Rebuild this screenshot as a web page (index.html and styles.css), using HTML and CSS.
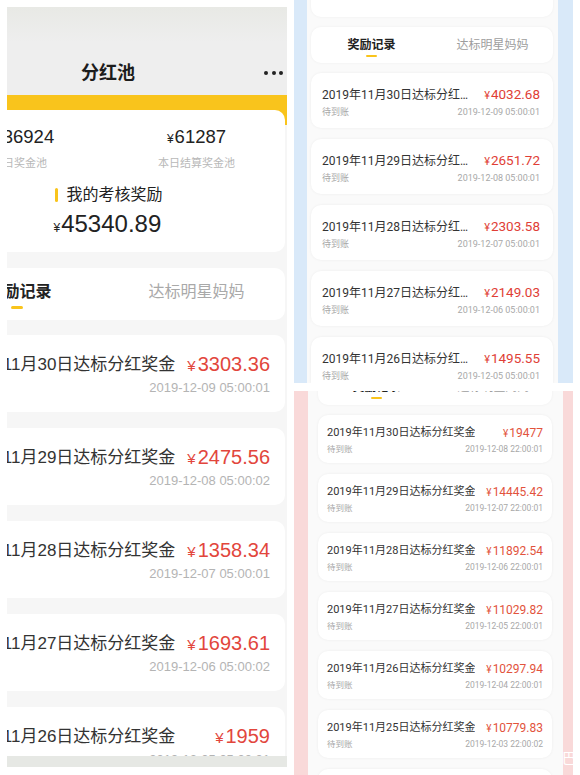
FILE: index.html
```html
<!DOCTYPE html>
<html lang="zh-CN">
<head>
<meta charset="utf-8">
<title>分红池</title>
<link rel="stylesheet" href="styles.css">
</head>
<body>
<div class="collage">
  <section class="phone-left">
    <div class="lp-viewport">
      <div class="lp-content">
        <header class="lp-header">
          <div class="lp-titlebar">
            <span></span>
            <h1>分红池</h1>
            <span class="lp-more"><i></i><i></i><i></i></span>
          </div>
        </header>
        <div class="lp-body">
          <div class="summary">
            <div class="stats">
              <div class="stat">
                <div class="stat-num"><span class="yen-s">¥</span>136924</div>
                <div class="stat-label">今日奖金池</div>
              </div>
              <div class="stat">
                <div class="stat-num"><span class="yen-s">¥</span>61287</div>
                <div class="stat-label">本日结算奖金池</div>
              </div>
            </div>
            <div class="mine">
              <div class="mine-inner">
                <div class="mine-title">我的考核奖励</div>
                <div class="mine-amount"><span class="yen-s">¥</span>45340.89</div>
              </div>
            </div>
          </div>

          <div class="lp-tabs">
            <div class="lp-tab active">奖励记录</div>
            <div class="lp-tab">达标明星妈妈</div>
          </div>

          <div class="lp-list">
            <div class="lcard">
              <div class="lrow"><span class="ltitle">2019年11月30日达标分红奖金</span><span class="lamount"><span class="y">¥</span>3303.36</span></div>
              <div class="ldate">2019-12-09 05:00:01</div>
            </div>
            <div class="lcard">
              <div class="lrow"><span class="ltitle">2019年11月29日达标分红奖金</span><span class="lamount"><span class="y">¥</span>2475.56</span></div>
              <div class="ldate">2019-12-08 05:00:02</div>
            </div>
            <div class="lcard">
              <div class="lrow"><span class="ltitle">2019年11月28日达标分红奖金</span><span class="lamount"><span class="y">¥</span>1358.34</span></div>
              <div class="ldate">2019-12-07 05:00:01</div>
            </div>
            <div class="lcard">
              <div class="lrow"><span class="ltitle">2019年11月27日达标分红奖金</span><span class="lamount"><span class="y">¥</span>1693.61</span></div>
              <div class="ldate">2019-12-06 05:00:02</div>
            </div>
            <div class="lcard">
              <div class="lrow"><span class="ltitle">2019年11月26日达标分红奖金</span><span class="lamount"><span class="y">¥</span>1959</span></div>
              <div class="ldate">2019-12-05 05:00:01</div>
            </div>
          </div>
        </div>
      </div>
    </div>
    <div class="lp-bar"></div>
  </section>

  <div class="right-col">
    <section class="phone phone-blue">
      <div class="screen">
        <div class="top-card"></div>
        <div class="tabs">
          <div class="tab active">奖励记录</div>
          <div class="tab">达标明星妈妈</div>
        </div>
        <div class="list">
          <div class="card">
            <div class="row"><span class="title">2019年11月30日达标分红奖金</span><span class="amount"><span class="y">¥</span>4032.68</span></div>
            <div class="sub"><span>待到账</span><span>2019-12-09 05:00:01</span></div>
          </div>
          <div class="card">
            <div class="row"><span class="title">2019年11月29日达标分红奖金</span><span class="amount"><span class="y">¥</span>2651.72</span></div>
            <div class="sub"><span>待到账</span><span>2019-12-08 05:00:01</span></div>
          </div>
          <div class="card">
            <div class="row"><span class="title">2019年11月28日达标分红奖金</span><span class="amount"><span class="y">¥</span>2303.58</span></div>
            <div class="sub"><span>待到账</span><span>2019-12-07 05:00:01</span></div>
          </div>
          <div class="card">
            <div class="row"><span class="title">2019年11月27日达标分红奖金</span><span class="amount"><span class="y">¥</span>2149.03</span></div>
            <div class="sub"><span>待到账</span><span>2019-12-06 05:00:01</span></div>
          </div>
          <div class="card">
            <div class="row"><span class="title">2019年11月26日达标分红奖金</span><span class="amount"><span class="y">¥</span>1495.55</span></div>
            <div class="sub"><span>待到账</span><span>2019-12-05 05:00:01</span></div>
          </div>
        </div>
      </div>
    </section>

    <section class="phone phone-pink">
      <div class="screen">
        <div class="tabs">
          <div class="tab active">奖励记录</div>
          <div class="tab">达标明星妈妈</div>
        </div>
        <div class="list">
          <div class="card">
            <div class="row"><span class="title">2019年11月30日达标分红奖金</span><span class="amount"><span class="y">¥</span>19477</span></div>
            <div class="sub"><span>待到账</span><span>2019-12-08 22:00:01</span></div>
          </div>
          <div class="card">
            <div class="row"><span class="title">2019年11月29日达标分红奖金</span><span class="amount"><span class="y">¥</span>14445.42</span></div>
            <div class="sub"><span>待到账</span><span>2019-12-07 22:00:01</span></div>
          </div>
          <div class="card">
            <div class="row"><span class="title">2019年11月28日达标分红奖金</span><span class="amount"><span class="y">¥</span>11892.54</span></div>
            <div class="sub"><span>待到账</span><span>2019-12-06 22:00:01</span></div>
          </div>
          <div class="card">
            <div class="row"><span class="title">2019年11月27日达标分红奖金</span><span class="amount"><span class="y">¥</span>11029.82</span></div>
            <div class="sub"><span>待到账</span><span>2019-12-05 22:00:01</span></div>
          </div>
          <div class="card">
            <div class="row"><span class="title">2019年11月26日达标分红奖金</span><span class="amount"><span class="y">¥</span>10297.94</span></div>
            <div class="sub"><span>待到账</span><span>2019-12-04 22:00:01</span></div>
          </div>
          <div class="card">
            <div class="row"><span class="title">2019年11月25日达标分红奖金</span><span class="amount"><span class="y">¥</span>10779.83</span></div>
            <div class="sub"><span>待到账</span><span>2019-12-03 22:00:02</span></div>
          </div>
          <div class="card">
            <div class="row"><span class="title">2019年11月24日达标分红奖金</span><span class="amount"><span class="y">¥</span>10512.36</span></div>
            <div class="sub"><span>待到账</span><span>2019-12-02 22:00:01</span></div>
          </div>
        </div>
      </div>
    </section>
  </div>

  <span class="watermark">巴</span>
</div>
</body>
</html>
```

FILE: styles.css
```css
* { box-sizing: border-box; }

html, body {
  margin: 0;
  padding: 0;
  background: #ffffff;
}

body {
  width: 580px;
  height: 775px;
  overflow: hidden;
}

.collage {
  position: relative;
  display: flex;
  gap: 7px;
  padding-left: 7px;
  height: 775px;
}

/* ---------- left phone ---------- */
.phone-left {
  width: 280px;
  height: 760px;
  margin-top: 7px;
  display: flex;
  flex-direction: column;
  background: #f6f6f6;
  font-family: "Liberation Sans", "Noto Sans CJK SC", sans-serif;
}

.lp-viewport {
  flex: 1;
  min-height: 0;
  overflow: hidden;
  display: flex;
  justify-content: flex-end;
}

.lp-content {
  width: 358px;
  flex-shrink: 0;
}

.lp-header {
  height: 88px;
  padding-top: 44px;
  background: linear-gradient(#e8e9e5, #eeeeee 40%, #eeeeee);
}

.lp-titlebar {
  height: 44px;
  display: grid;
  grid-template-columns: 1fr auto 1fr;
  align-items: center;
}

.lp-titlebar h1 {
  margin: 0;
  font-size: 18px;
  line-height: 24px;
  font-weight: bold;
  color: #1c1c1c;
}

.lp-more {
  justify-self: end;
  display: flex;
  gap: 3.5px;
  margin-right: 4px;
}

.lp-more i {
  width: 4px;
  height: 4px;
  border-radius: 50%;
  background: #222;
}

.lp-body {
  padding: 15px 2px 0;
  background: linear-gradient(#f9c41c 0, #f9c41c 30px, #f6f6f6 30px);
}

.summary {
  height: 142px;
  background: #ffffff;
  border-radius: 10px;
  overflow: hidden;
}

.stats {
  display: grid;
  grid-template-columns: 1fr 1fr;
  padding-top: 15px;
  text-align: center;
}

.stat-num {
  height: 24px;
  font-size: 18.5px;
  line-height: 24px;
  color: #222;
  white-space: nowrap;
}

.yen-s {
  font-size: 12px;
  margin-right: 1px;
}

.stat-label {
  height: 16px;
  margin-top: 6px;
  font-size: 11px;
  line-height: 16px;
  color: #b8b8b8;
  white-space: nowrap;
}

.mine {
  margin-top: 13px;
  display: flex;
  justify-content: center;
}

.mine-title {
  height: 22px;
  display: flex;
  align-items: center;
  gap: 8px;
  padding-left: 2px;
  font-size: 16px;
  line-height: 22px;
  color: #222;
}

.mine-title::before {
  content: "";
  width: 3px;
  height: 14px;
  border-radius: 2px;
  background: #f9c41c;
}

.mine-amount {
  height: 30px;
  margin-top: 3px;
  font-size: 24px;
  line-height: 30px;
  color: #222;
}

.lp-tabs {
  margin-top: 16px;
  height: 52px;
  background: #ffffff;
  border-radius: 10px;
  display: grid;
  grid-template-columns: 1fr 1fr;
}

.lp-tab {
  padding-top: 13px;
  text-align: center;
  font-size: 16px;
  line-height: 22px;
  color: #a9a9a9;
}

.lp-tab.active {
  color: #222;
  font-weight: bold;
}

.lp-tab.active::after {
  content: "";
  display: block;
  width: 12px;
  height: 3px;
  margin: 3px auto 0;
  border-radius: 2px;
  background: #f9c41c;
  transform: translateX(-3px);
}

.lp-list {
  margin-top: 15px;
  display: flex;
  flex-direction: column;
  gap: 16px;
}

.lcard {
  height: 77px;
  background: #ffffff;
  border-radius: 10px;
  padding: 18px 15px 0 17px;
}

.lrow {
  height: 24px;
  display: flex;
  justify-content: space-between;
  align-items: center;
  line-height: 24px;
}

.ltitle {
  font-size: 17px;
  color: #333;
  white-space: nowrap;
}

.lamount {
  font-size: 20px;
  color: #e2463c;
  white-space: nowrap;
}

.lamount .y {
  font-size: 15px;
  margin-right: 2px;
}

.ldate {
  height: 16px;
  margin-top: 3px;
  text-align: right;
  font-size: 13px;
  line-height: 16px;
  color: #b4b4b4;
}

.lp-bar {
  height: 11px;
  background: #e6e8e4;
}

/* ---------- right phones ---------- */
.right-col {
  width: 279px;
  display: flex;
  flex-direction: column;
  gap: 8px;
}

.phone {
  font-family: "Roboto", "Noto Sans CJK SC", sans-serif;
}

.phone .screen {
  height: 100%;
  overflow: hidden;
  background: #fafafa;
}

.phone-blue {
  height: 383px;
  padding: 0 15px 0 13px;
  background: #d9e9f9;
}

.phone-blue .screen {
  padding: 0 5px 0 4px;
}

.phone-pink {
  height: 384px;
  padding: 0 10px 0 14px;
  background: #f9d9d9;
}

.phone-pink .screen {
  padding: 0 11px 0 10px;
}

.top-card {
  height: 50px;
  margin-top: -33px;
  background: #ffffff;
  border-radius: 10px;
  box-shadow: 0 0 3px rgba(0, 0, 0, 0.05);
}

.tabs {
  margin-top: 10px;
  height: 36px;
  display: grid;
  grid-template-columns: 1fr 1fr;
  background: #ffffff;
  border-radius: 10px;
  box-shadow: 0 0 3px rgba(0, 0, 0, 0.05);
}

.phone-pink .tabs {
  margin-top: -22px;
}

.tab {
  padding-top: 10px;
  text-align: center;
  font-size: 12px;
  line-height: 16px;
  color: #9d9d9d;
}

.tab.active {
  color: #222;
  font-weight: bold;
}

.tab.active::after {
  content: "";
  display: block;
  width: 11px;
  height: 2px;
  margin: 2px auto 0;
  border-radius: 1px;
  background: #f9c41c;
}

.list {
  margin-top: 10px;
  display: flex;
  flex-direction: column;
  gap: 11px;
}

.card {
  background: #ffffff;
  border-radius: 10px;
  box-shadow: 0 0 3px rgba(0, 0, 0, 0.06);
}

.row {
  display: flex;
  align-items: center;
  justify-content: space-between;
}

.title {
  flex: 0 1 auto;
  min-width: 0;
  overflow: hidden;
  text-overflow: ellipsis;
  white-space: nowrap;
  color: #333;
}

.amount {
  flex-shrink: 0;
  white-space: nowrap;
}

.amount .y {
  margin-right: 1px;
}

.sub {
  display: flex;
  justify-content: space-between;
  color: #a8a8a8;
  white-space: nowrap;
}

/* blue variant */
.phone-blue .card {
  height: 55px;
  padding: 13px 13px 0 11px;
}

.phone-blue .row {
  height: 18px;
  line-height: 18px;
}

.phone-blue .title {
  font-size: 12px;
}

.phone-blue .amount {
  margin-left: 10px;
  font-size: 13.5px;
  color: #e03e36;
}

.phone-blue .amount .y {
  font-size: 11px;
}

.phone-blue .sub {
  height: 12px;
  margin-top: 2px;
  font-size: 9px;
  line-height: 12px;
}

/* pink variant */
.phone-pink .card {
  height: 48px;
  padding: 10px 9px 0 9px;
}

.phone-pink .row {
  height: 16px;
  line-height: 16px;
}

.phone-pink .title {
  font-size: 11px;
}

.phone-pink .amount {
  margin-left: 6px;
  font-size: 12px;
  color: #e2533c;
}

.phone-pink .amount .y {
  font-size: 10px;
}

.phone-pink .sub {
  height: 11px;
  margin-top: 3px;
  font-size: 8.5px;
  line-height: 11px;
}

.watermark {
  position: absolute;
  left: 562px;
  top: 748px;
  font-family: "Noto Sans CJK SC", sans-serif;
  font-size: 14px;
  line-height: 18px;
  color: #ffffff;
}
```
